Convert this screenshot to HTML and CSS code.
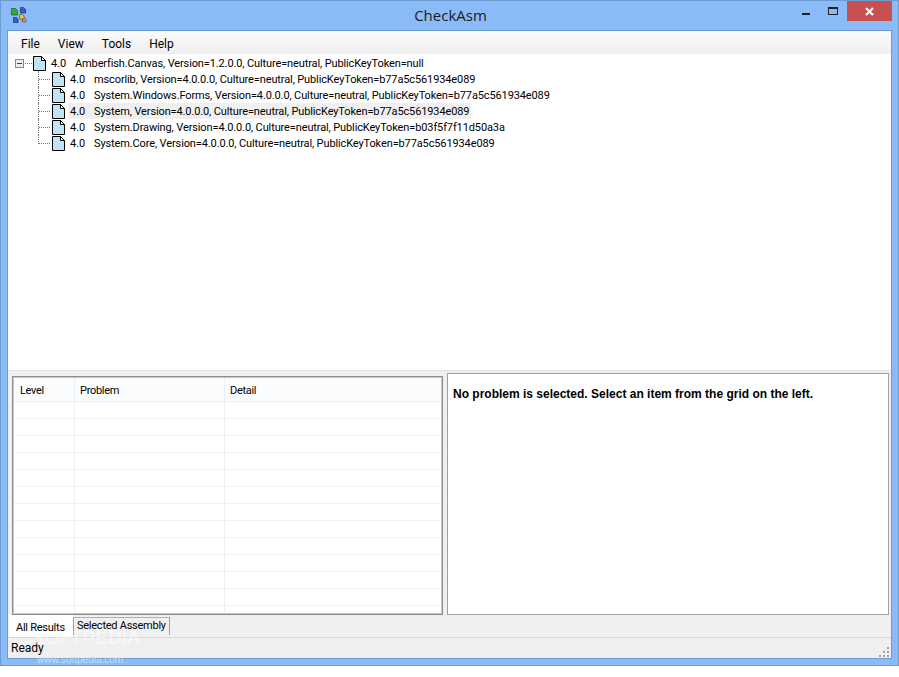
FILE: index.html
```html
<!DOCTYPE html>
<html lang="en">
<head>
	<meta charset="UTF-8">
	<title>CheckAsm</title>
	<link rel="stylesheet" href="styles.css">
</head>
<body>
	<div class="window">
		<div class="titlebar">
			<svg class="appicon" width="16" height="16" viewBox="0 0 16 16">
				<path d="M.5 1.5h4l2 2v4.5h-6z" fill="#2fae2f" stroke="#1d5c1d" stroke-width=".7"/>
				<path d="M9.5 .5h3l2 2v3.5h-5z" fill="#2f62d8" stroke="#1b2f78" stroke-width=".7"/>
				<path d="M11.5 11.5h2l1.500 1v2.500h-3.500z" fill="#e89090" stroke="#8a3030" stroke-width=".7"/>
				<path d="M8.500 7.500h3l1.500 1.500v3h-4.500z" fill="#eec63a" stroke="#6b5a12" stroke-width=".7"/>
				<path d="M2.500 10.500h3l1.500 1.500v3.500h-4.500z" fill="#2f62d8" stroke="#1b2f78" stroke-width=".7"/>
			</svg>
			<div class="title">CheckAsm</div>
			<div class="winbtns">
				<div class="btn-min"><span></span></div>
				<div class="btn-max"><span></span></div>
				<div class="btn-close">
					<svg width="9" height="9" viewBox="0 0 9 9"><path d="M1 1l7 7M8 1l-7 7" stroke="#fff" stroke-width="2.2" fill="none"/></svg>
				</div>
			</div>
		</div>
		<div class="client">
			<ul class="menu">
				<li>File</li>
				<li>View</li>
				<li>Tools</li>
				<li>Help</li>
			</ul>
			<div class="tree">
				<div class="node root">
					<span class="expander"><span></span></span>
					<span class="dash"></span>
					<svg class="doc" width="13" height="15" viewBox="0 0 13 15"><path d="M.5.5h8l4 4v10H.5z" fill="#c0e4f4" stroke="#000"/><path d="M8.5.5v4h4z" fill="#fff" stroke="#000"/></svg>
					<span class="ver">4.0</span>
					<span class="name">Amberfish.Canvas, Version=1.2.0.0, Culture=neutral, PublicKeyToken=null</span>
				</div>
				<div class="children">
					<div class="node">
						<span class="branch"></span>
						<svg class="doc" width="13" height="15" viewBox="0 0 13 15"><path d="M.5.5h8l4 4v10H.5z" fill="#c0e4f4" stroke="#000"/><path d="M8.5.5v4h4z" fill="#fff" stroke="#000"/></svg>
						<span class="ver">4.0</span>
						<span class="name">mscorlib, Version=4.0.0.0, Culture=neutral, PublicKeyToken=b77a5c561934e089</span>
					</div>
					<div class="node">
						<span class="branch"></span>
						<svg class="doc" width="13" height="15" viewBox="0 0 13 15"><path d="M.5.5h8l4 4v10H.5z" fill="#c0e4f4" stroke="#000"/><path d="M8.5.5v4h4z" fill="#fff" stroke="#000"/></svg>
						<span class="ver">4.0</span>
						<span class="name">System.Windows.Forms, Version=4.0.0.0, Culture=neutral, PublicKeyToken=b77a5c561934e089</span>
					</div>
					<div class="node selected">
						<span class="branch"></span>
						<svg class="doc" width="13" height="15" viewBox="0 0 13 15"><path d="M.5.5h8l4 4v10H.5z" fill="#c0e4f4" stroke="#000"/><path d="M8.5.5v4h4z" fill="#fff" stroke="#000"/></svg>
						<span class="ver">4.0</span>
						<span class="name">System, Version=4.0.0.0, Culture=neutral, PublicKeyToken=b77a5c561934e089</span>
					</div>
					<div class="node">
						<span class="branch"></span>
						<svg class="doc" width="13" height="15" viewBox="0 0 13 15"><path d="M.5.5h8l4 4v10H.5z" fill="#c0e4f4" stroke="#000"/><path d="M8.5.5v4h4z" fill="#fff" stroke="#000"/></svg>
						<span class="ver">4.0</span>
						<span class="name">System.Drawing, Version=4.0.0.0, Culture=neutral, PublicKeyToken=b03f5f7f11d50a3a</span>
					</div>
					<div class="node last">
						<span class="branch"></span>
						<svg class="doc" width="13" height="15" viewBox="0 0 13 15"><path d="M.5.5h8l4 4v10H.5z" fill="#c0e4f4" stroke="#000"/><path d="M8.5.5v4h4z" fill="#fff" stroke="#000"/></svg>
						<span class="ver">4.0</span>
						<span class="name">System.Core, Version=4.0.0.0, Culture=neutral, PublicKeyToken=b77a5c561934e089</span>
					</div>
				</div>
			</div>
			<div class="split">
				<div class="gridpane">
					<div class="grid">
						<div class="gridhead">
							<div class="col-level">Level</div>
							<div class="col-problem">Problem</div>
							<div class="col-detail">Detail</div>
						</div>
						<div class="gridrow"><div class="col-level"></div><div class="col-problem"></div><div class="col-detail"></div></div>
						<div class="gridrow"><div class="col-level"></div><div class="col-problem"></div><div class="col-detail"></div></div>
						<div class="gridrow"><div class="col-level"></div><div class="col-problem"></div><div class="col-detail"></div></div>
						<div class="gridrow"><div class="col-level"></div><div class="col-problem"></div><div class="col-detail"></div></div>
						<div class="gridrow"><div class="col-level"></div><div class="col-problem"></div><div class="col-detail"></div></div>
						<div class="gridrow"><div class="col-level"></div><div class="col-problem"></div><div class="col-detail"></div></div>
						<div class="gridrow"><div class="col-level"></div><div class="col-problem"></div><div class="col-detail"></div></div>
						<div class="gridrow"><div class="col-level"></div><div class="col-problem"></div><div class="col-detail"></div></div>
						<div class="gridrow"><div class="col-level"></div><div class="col-problem"></div><div class="col-detail"></div></div>
						<div class="gridrow"><div class="col-level"></div><div class="col-problem"></div><div class="col-detail"></div></div>
						<div class="gridrow"><div class="col-level"></div><div class="col-problem"></div><div class="col-detail"></div></div>
						<div class="gridrow"><div class="col-level"></div><div class="col-problem"></div><div class="col-detail"></div></div>
						<div class="gridrow"><div class="col-level"></div><div class="col-problem"></div><div class="col-detail"></div></div>
					</div>
				</div>
				<div class="detail">No problem is selected. Select an item from the grid on the left.</div>
			</div>
			<div class="tabs">
				<div class="tab active">All Results</div>
				<div class="tab">Selected Assembly</div>
			</div>
			<div class="status">
				<span>Ready</span>
				<svg class="grip" width="12" height="12" viewBox="0 0 12 12" fill="#a0a0a0">
					<rect x="9" y="1" width="2" height="2"/>
					<rect x="5" y="5" width="2" height="2"/><rect x="9" y="5" width="2" height="2"/>
					<rect x="1" y="9" width="2" height="2"/><rect x="5" y="9" width="2" height="2"/><rect x="9" y="9" width="2" height="2"/>
				</svg>
			</div>
		</div>
		<div class="wm-big">SOFTPEDIA</div>
		<div class="wm-small">www.softpedia.com</div>
	</div>
</body>
</html>
```

FILE: styles.css
```css
ul{margin: 0; padding: 0; list-style: none;}
body{margin: 0; background: #fff; font-family: Roboto, "Noto Sans", sans-serif; font-size: 11px; color: #000;}
.window{width: 899px; height: 666px; box-sizing: border-box; background: #8abbf8; border: 1px solid #6d9bd0; display: flex; flex-direction: column; overflow: hidden; position: relative;}

.titlebar{height: 29px; flex: none; display: flex; position: relative;}
.appicon{position: absolute; left: 10px; top: 6px;}
.title{flex: 1; text-align: center; font-family: "Open Sans", sans-serif; font-size: 15px; line-height: 28px; color: #1c1c1c; padding-left: 2px;}
.winbtns{position: absolute; right: 6px; top: 0; display: flex;}
.btn-min, .btn-max{width: 26px; height: 20px; position: relative;}
.btn-min{margin-right: 1px;}
.btn-min span{position: absolute; left: 8px; top: 12px; width: 8px; height: 2px; background: #222;}
.btn-max span{position: absolute; left: 7px; top: 6px; width: 8px; height: 5px; border: 1px solid #222; border-top-width: 2px;}
.btn-close{width: 45px; height: 20px; background: #c75050; display: flex; align-items: center; justify-content: center;}

.client{margin: 0 6px 6px 6px; flex: 1; min-height: 0; background: #f0f0f0; border: 1px solid #6d9bd0; display: flex; flex-direction: column;}

.menu{height: 23px; flex: none; display: flex; background: linear-gradient(#fafafa, #f0f0f0); padding-left: 6px; line-height: 27px; font-size: 12px;}
.menu li{padding: 0 7px; margin-right: 4px;}

.tree{height: 316px; flex: none; background: #fff; padding-top: 1px; box-sizing: border-box;}
.node{height: 16px; display: flex; align-items: center; white-space: nowrap;}
.root{padding-left: 7px;}
.children{padding-left: 30px;}
.expander{width: 9px; height: 9px; box-sizing: border-box; border: 1px solid #8a8a8a; background: #ececec; display: flex; align-items: center; justify-content: center; flex: none;}
.expander span{width: 5px; height: 1px; background: #2a3f6a;}
.dash{width: 7px; margin: 0 1px 0 1px; border-top: 1px dotted #777;}
.branch{width: 12px; height: 16px; flex: none; border-left: 1px dotted #777; position: relative; box-sizing: border-box; margin-right: 2px;}
.branch::after{content: ""; position: absolute; left: 0; top: 8px; width: 11px; border-top: 1px dotted #777;}
.last .branch{height: 9px; align-self: flex-start;}
.doc{flex: none;}
.ver, .name{line-height: 14px; padding-top: 2px;}
.ver{margin-left: 3px; padding-left: 2px; width: 24px;}
.name{letter-spacing: -0.12px; padding-right: 2px;}
.selected .ver, .selected .name{background: #f0f0f0;}

.split{flex: 1; min-height: 0; display: flex; padding-top: 2px; border-top: 1px solid #e4e4e4;}
.gridpane{width: 438px; flex: none; padding: 3px 3px 0 4px; box-sizing: border-box;}
.grid{height: 100%; box-sizing: border-box; background: #fff; border: 1px solid #8c8c8c; outline: 1px solid #c8c8c8; outline-offset: -2px; overflow: hidden;}
.gridhead{height: 25px; display: flex; background: #fbfcfe; border-bottom: 1px solid #e8f0fb; line-height: 27px; box-sizing: border-box; letter-spacing: -0.3px;}
.gridhead div{padding-left: 5px; border-right: 1px solid #e8f0fb; box-sizing: border-box;}
.gridhead .col-level{padding-left: 7px;}
.gridrow{height: 17px; flex: none; display: flex; border-bottom: 1px solid #eef0f3; box-sizing: border-box;}
.gridrow div{border-right: 1px solid #eef0f3; box-sizing: border-box;}
.col-level{width: 62px;}
.col-problem{width: 150px;}
.col-detail{flex: 1;}
.gridhead .col-detail{border-right: none;}
.gridrow .col-detail{border-right: none;}
.detail{flex: 1; margin: 0 2px 0 1px; background: #fff; border: 1px solid #a0a0a0; box-sizing: border-box; padding: 13px 5px; font-family: "Liberation Sans", sans-serif; font-weight: bold; font-size: 12px; line-height: 14px;}

.tabs{height: 22px; flex: none; display: flex; padding-left: 1px; align-items: flex-start; letter-spacing: -0.25px;}
.tab{padding: 0 3px 0 3px; height: 17px; line-height: 16px; margin-top: 2px; border: 1px solid #a0a0a0; border-top-color: #b0b0b0; border-bottom: none;}
.tab.active{background: #fff; border: none; margin-top: 0; height: 22px; line-height: 25px; padding: 0 0 0 7px; width: 57px;}
.status{height: 21px; flex: none; display: flex; align-items: center; justify-content: space-between; border-top: 1px solid #d8d8d8; padding-left: 3px; position: relative; box-sizing: border-box; font-size: 12px;}
.grip{position: absolute; right: 1px; bottom: 0;}

.wm-big{position: absolute; left: 31px; top: 625px; font-family: "Liberation Sans", sans-serif; font-size: 19px; line-height: 24px; color: #fff; opacity: .55;}
.wm-small{position: absolute; left: 36px; top: 653px; font-family: "Liberation Sans", sans-serif; font-size: 10px; line-height: 12px; color: #d8e6f7; opacity: .8;}
```
